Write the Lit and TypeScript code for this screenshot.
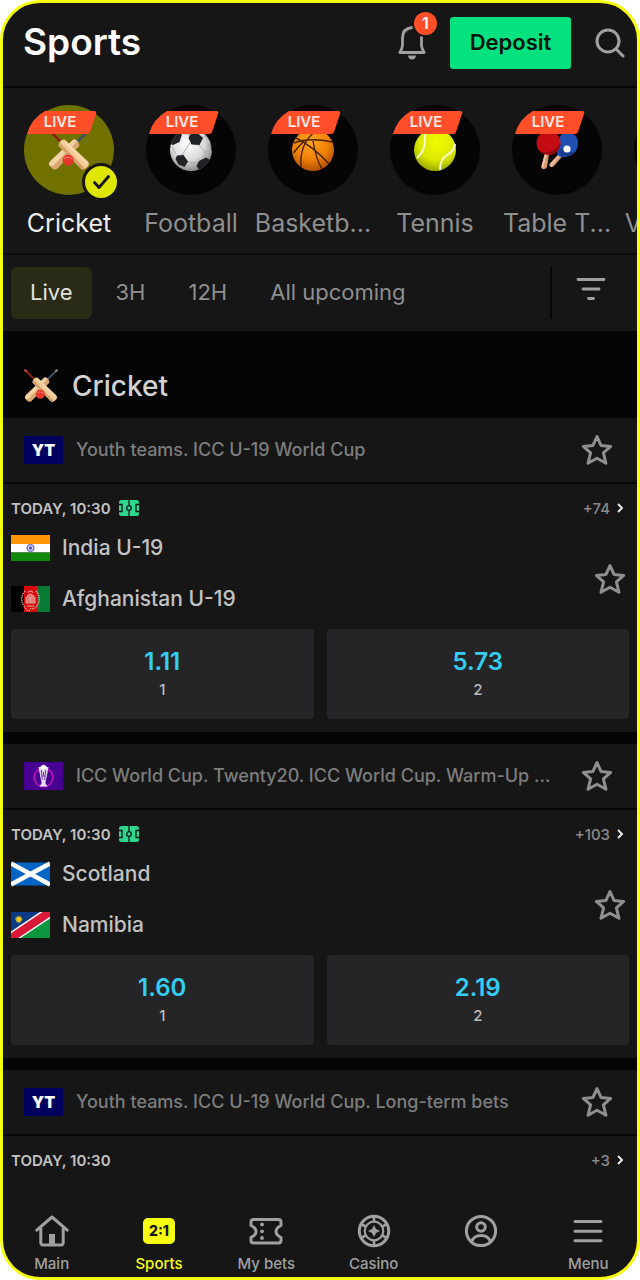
import { LitElement, html, svg, css } from "lit";
import { customElement, property, state } from "lit/decorators.js";

type Team = { name: string; flag: string };
type Match = { time: string; more: string; pitch: boolean; teams: Team[]; odds: string[] };
type League = { badge: string; name: string; match: Match };

const SPORTS = [
  { id: "cricket", label: "Cricket", live: true },
  { id: "football", label: "Football", live: true },
  { id: "basketball", label: "Basketb...", live: true },
  { id: "tennis", label: "Tennis", live: true },
  { id: "tabletennis", label: "Table T...", live: true },
  { id: "volleyball", label: "Volleyb...", live: false },
];

const LEAGUES: League[] = [
  {
    badge: "yt",
    name: "Youth teams. ICC U-19 World Cup",
    match: {
      time: "TODAY, 10:30",
      more: "+74",
      pitch: true,
      teams: [
        { name: "India U-19", flag: "india" },
        { name: "Afghanistan U-19", flag: "afghanistan" },
      ],
      odds: ["1.11", "5.73"],
    },
  },
  {
    badge: "cup",
    name: "ICC World Cup. Twenty20. ICC World Cup. Warm-Up ...",
    match: {
      time: "TODAY, 10:30",
      more: "+103",
      pitch: true,
      teams: [
        { name: "Scotland", flag: "scotland" },
        { name: "Namibia", flag: "namibia" },
      ],
      odds: ["1.60", "2.19"],
    },
  },
  {
    badge: "yt",
    name: "Youth teams. ICC U-19 World Cup. Long-term bets",
    match: { time: "TODAY, 10:30", more: "+3", pitch: false, teams: [], odds: [] },
  },
];

const cricketArt = svg`
  <g stroke-linecap="round" fill="none">
    <path d="M1.500 1.500 11 11" stroke="#8f1d12" stroke-width="2"/>
    <path d="M1.200 1.200 2 2" stroke="#d8523c" stroke-width="2"/>
    <path d="M32.500 1.500 23 11" stroke="#3d4f5c" stroke-width="2"/>
    <path d="M32.800 1.200 32 2" stroke="#7c8a94" stroke-width="2"/>
  </g>
  <path d="M20.500 8.500 Q24.500 8 25.500 13.500 L8 31.500 Q6 33.800 3.500 32 L1.500 30 Q0 28 2 26 Z" fill="#d9a873"/>
  <path d="M20.500 8.500 Q22.500 8 23.500 10 L4.500 29.500 1.500 30 Q0 28 2 26 Z" fill="#f3d3a4"/>
  <path d="M13.500 8.500 Q9.500 8 8.500 13.500 L26 31.500 Q28 33.800 30.500 32 L32.500 30 Q34 28 32 26 Z" fill="#f2cb98"/>
  <path d="M9.300 10.800 Q8.500 12 8.500 13.500 L26 31.500 Q28 33.800 30 32 Z" fill="#d6a16a"/>
  <path d="M13.800 10.500 31.500 28" stroke="#fbe3bd" stroke-width="1" fill="none"/>
  <circle cx="16.300" cy="25.200" r="4.500" fill="#e5382d"/>
  <path d="M12.800 23.800 Q16.300 21.800 19.800 24" stroke="#ff8273" stroke-width=".8" fill="none"/>`;

const cricket = (cls: string) => html`<svg class=${cls} viewBox="0 0 34 34" aria-hidden="true">${cricketArt}</svg>`;

const art: Record<string, unknown> = {
  cricket: cricket("ball"),
  football: html`<svg class="ball" viewBox="0 0 42 42" aria-hidden="true">
    <defs><radialGradient id="f" cx=".42" cy=".35" r=".65"><stop offset="0" stop-color="#fff"/><stop offset=".6" stop-color="#dcdcdc"/><stop offset="1" stop-color="#8d8d8d"/></radialGradient>
    <clipPath id="fc"><circle cx="21" cy="21" r="21"/></clipPath></defs>
    <circle cx="21" cy="21" r="21" fill="url(#f)"/>
    <g clip-path="url(#fc)">
      <g stroke="#a9a9a9" stroke-width=".9" fill="none"><path d="M20 6 11 4M32 9 38 5M29 16 35 23M20 14 14 23M16 33 27 34M6 25 2 18M35 23 35 29M14 23 12 26M35 23 42 22"/></g>
      <g fill="#202124"><path d="M20 5.500 27 3.500 33 9 29.500 16 21.500 15.500 18.500 9Z"/><path d="M7 26.500 13.500 26 18 32.500 14.500 38 8.500 35.500 5.500 30Z"/><path d="M29 32 36 28.500 42 32 38 41 30 42 26.500 37Z"/><path d="M0 8 8 3 12 5.500 9.500 13 3 16 -2 14Z"/><path d="M40 12 44 12 44 25 41.500 22Z"/></g>
    </g></svg>`,
  basketball: html`<svg class="ball" viewBox="0 0 42 42" aria-hidden="true">
    <defs><radialGradient id="b" cx=".45" cy=".3" r=".75"><stop offset="0" stop-color="#ffa51e"/><stop offset=".55" stop-color="#f08208"/><stop offset="1" stop-color="#a94700"/></radialGradient></defs>
    <circle cx="21" cy="21" r="21" fill="url(#b)"/>
    <g fill="none" stroke="#4b2203" stroke-width="1.400"><path d="M2 14 Q18 8 40 13M4 9 Q22 18 37 35M9 38 Q7 14 25 1M1.500 24 Q6 18 11 13M21 12 Q24 30 30 40"/></g></svg>`,
  tennis: html`<svg class="ball" viewBox="0 0 42 42" aria-hidden="true">
    <defs><radialGradient id="t" cx=".55" cy=".3" r=".75"><stop offset="0" stop-color="#f1fb00"/><stop offset=".6" stop-color="#dbe800"/><stop offset="1" stop-color="#8f9e00"/></radialGradient></defs>
    <circle cx="21" cy="21" r="21" fill="url(#t)"/>
    <g fill="none" stroke="#f6f8d8" stroke-width="2"><path d="M11 2.500 Q11 10 10.500 16 T3 29M41 15 Q40 22 33 26 T26 41"/></g></svg>`,
  tabletennis: html`<svg class="ball" viewBox="0 0 42 42" aria-hidden="true">
    <path d="M24 24 27 26.500 18 37 Q16 39 14 37.500 T15 33.500Z" fill="#d79a78"/><path d="M24 24 25.500 25 15.500 37 14 36.500 Q14 35 15 33.500Z" fill="#f0c0a0"/>
    <path d="M21 26 25 28 Q34 29 40 22 Q44 14 40 7 Q33 1 26 5 Q21 10 22 18Z" fill="#1f4fb0"/>
    <path d="M22 20 25 27 Q34 29 40 22 Q32 26 27 20Z" fill="#173d8c"/>
    <path d="M9 24 13 25 11 38 Q10 40.500 7.500 40 T5.500 37Z" fill="#d79a78"/><path d="M9 24 11 24.500 7 40 Q5.500 39 5.500 37Z" fill="#f0c0a0"/>
    <circle cx="12.500" cy="14" r="12" fill="#c40d12"/><path d="M2 20 Q8 28 19 24 Q24 20 24.500 14 Q20 22 12 23 Q6 24 2 20Z" fill="#8d0b10"/>
    <circle cx="31" cy="20" r="3.600" fill="#fff"/></svg>`,
  volleyball: html`<svg class="ball" viewBox="0 0 42 42" aria-hidden="true"><circle cx="21" cy="21" r="21" fill="#e9c536"/></svg>`,
};

const flags: Record<string, unknown> = {
  india: html`<svg class="flag" viewBox="0 0 39 26" aria-hidden="true"><path fill="#ff9608" d="M0 0h39v9H0z"/><path fill="#fff" d="M0 9h39v8.500H0z"/><path fill="#108a08" d="M0 17.500h39V26H0z"/><circle cx="19.500" cy="13" r="3.600" fill="#c9c7ee" stroke="#4b47b4" stroke-width=".9"/><circle cx="19.500" cy="13" r="1.500" fill="#4b47b4"/></svg>`,
  afghanistan: html`<svg class="flag" viewBox="0 0 39 26" aria-hidden="true"><path d="M0 0h13v26H0z"/><path fill="#d60a0e" d="M13 0h13v26H13z"/><path fill="#0a7a35" d="M26 0h13v26H26z"/><g fill="none" stroke="#e9a9a0"><path d="M14 5 Q8 12 13 20 T19.500 22.500 Q23 23.500 26 20 Q31 12 25 5" stroke-width="1.300" stroke-dasharray="1.500 .8"/><path d="M15 17 V12 Q19.500 4 24 12 V17Z" fill="#e8776e" stroke-width=".9"/><path d="M16 20h7M17 6.500 Q19.500 3.500 22 6.500M19.500 11v5" stroke-width="1.200"/></g></svg>`,
  scotland: html`<svg class="flag" viewBox="0 0 39 26" aria-hidden="true"><path fill="#0565c5" d="M0 1.500h39v23H0z"/><path d="M0 2.500 39 23.500M39 2.500 0 23.500" stroke="#fff" stroke-width="4.500"/></svg>`,
  namibia: html`<svg class="flag" viewBox="0 0 39 26" aria-hidden="true"><path fill="#0a3a86" d="M0 0h39L0 26z"/><path fill="#0b963f" d="M39 0v26H0z"/><path fill="#fff" d="M29 0h10v6.500L9.500 26H0v-6.500z"/><path fill="#d91737" d="M31.500 0H39v4.800L7.200 26H0v-4.800z"/><circle cx="7.800" cy="7.300" r="2.600" fill="#f5cf17"/><circle cx="7.800" cy="7.300" r="3.200" fill="none" stroke="#f5cf17" stroke-width="1" stroke-dasharray="1 .8"/></svg>`,
};

const star = html`<svg class="star" viewBox="0 0 32 32" aria-hidden="true"><path d="M16 2.500 20 11.400 29.700 12.400 22.400 18.900 25 29.300 16 24.300 7 29.300 9.600 18.900 2.300 12.400 12 11.400Z" fill="none" stroke="#8f8f8f" stroke-width="3" stroke-linejoin="round"/></svg>`;

const pitchIcon = html`<svg class="pitch" viewBox="0 0 20 16" role="img" aria-label="Field view"><rect width="20" height="16" rx="2.500" fill="#2fd68b"/><g fill="none" stroke="#16161a" stroke-width="1.300"><path d="M10 0v5.600M10 10.400V16M0 4.500h3v7H0M20 4.500h-3v7h3"/><circle cx="10" cy="8" r="2.300"/></g></svg>`;

const navIcons: Record<string, unknown> = {
  Main: html`<svg class="nav-icon" viewBox="0 0 36 34" fill="none" stroke="#a0a0a0" stroke-width="3" stroke-linejoin="round" stroke-linecap="round" aria-hidden="true"><path d="M2.800 16.200 18 3 33.200 16.200M6.800 14V28.500Q6.800 31 9.300 31H26.700Q29.200 31 29.200 28.500V14"/><path d="M15 30V20h6v10z" fill="#a0a0a0" stroke="none"/></svg>`,
  "My bets": html`<svg class="nav-icon" viewBox="0 0 36 34" fill="none" stroke="#a0a0a0" stroke-width="3" stroke-linejoin="round" aria-hidden="true"><path d="M5.500 5.500H30.500Q33 5.500 33 8V11.500Q28 14 28 17.500T33 23.500V26.500Q33 29 30.500 29H5.500Q3 29 3 26.500V23.500Q8 21 8 17.500T3 11.500V8Q3 5.500 5.500 5.500Z"/><g fill="#a0a0a0" stroke="none"><circle cx="14" cy="10.500" r="1.900"/><circle cx="14" cy="17.300" r="1.900"/><circle cx="14" cy="24" r="1.900"/></g></svg>`,
  Casino: html`<svg class="nav-icon" viewBox="0 0 36 34" fill="none" stroke="#a0a0a0" aria-hidden="true"><circle cx="18" cy="17" r="14.700" stroke-width="3"/><circle cx="18" cy="17" r="9.300" stroke-width="2.200"/><path d="M18 3v5M18 26v5M5 10l5 2.700M26 21.300l5 2.700M5 24l5-2.700M26 12.700 31 10" stroke-width="2.600"/><path d="M18 11 20 15 24 17 20 19 18 23 16 19 12 17 16 15Z" fill="#a0a0a0" stroke="none"/></svg>`,
  "": html`<svg class="nav-icon" viewBox="0 0 36 34" fill="none" stroke="#a0a0a0" stroke-width="3" aria-hidden="true"><circle cx="18" cy="17" r="14.600"/><circle cx="18" cy="13" r="4.300"/><path d="M8.500 28 Q10.500 21.500 18 21.500T27.500 28"/></svg>`,
  Menu: html`<svg class="nav-icon" viewBox="0 0 36 34" stroke="#a0a0a0" stroke-width="3" stroke-linecap="round" aria-hidden="true"><path d="M5 7.500H31M5 17.200H31M5 26.800H31"/></svg>`,
};

const shared = css`
  * { box-sizing: border-box; }
  button { font: inherit; color: inherit; background: none; border: 0; padding: 0; margin: 0; cursor: pointer; }
  h1, h2, h3, p { margin: 0; }
  svg { display: block; flex: none; }
  .star { width: 32px; height: 32px; }
`;

@customElement("sport-chip")
class SportChip extends LitElement {
  @property() sport = "";
  @property() label = "";
  @property({ type: Boolean }) active = false;
  @property({ type: Boolean }) live = false;
  static styles = [shared, css`
    :host { display: block; flex: none; width: 122px; }
    .chip { display: flex; flex-direction: column; align-items: center; gap: 13px; width: 100%; }
    .disc { position: relative; display: grid; place-items: center; width: 90px; height: 90px; border-radius: 50%; background: #050505; }
    .active .disc { background: #717100; }
    .ball { width: 42px; height: 42px; }
    .ribbon { position: absolute; top: 6px; left: 0; width: 74px; height: 23px; }
    .live { position: absolute; top: 6px; left: 18px; width: 36px; font-size: 15px; font-weight: 600; line-height: 22px; color: #ffe9e2; text-align: center; }
    .check { position: absolute; right: -6px; bottom: -6px; width: 38px; height: 38px; }
    .label { font-size: 25px; line-height: 30px; color: #8f8f8f; white-space: nowrap; }
    .active .label { color: #ededed; }
  `];
  render() {
    return html`<button class="chip ${this.active ? "active" : ""}" aria-pressed=${this.active ? "true" : "false"}>
      <span class="disc">
        ${art[this.sport]}
        ${this.live ? html`<svg class="ribbon" viewBox="0 0 74 23" aria-hidden="true"><path d="M21 0H70Q73 0 72 3L66 21Q65.500 23 63 23H3Q7 8 21 0Z" fill="#ff4e28"/></svg>
        <span class="live">LIVE</span>` : ""}
        ${this.active ? html`<svg class="check" viewBox="0 0 38 38" aria-hidden="true"><circle cx="19" cy="19" r="17.500" fill="#dde500" stroke="#161616" stroke-width="3"/><path d="M12.500 19.500 17 24.500 26.500 13.500" fill="none" stroke="#161616" stroke-width="2.800" stroke-linecap="round" stroke-linejoin="round"/></svg>` : ""}
      </span>
      <span class="label">${this.label}</span>
    </button>`;
  }
}

@customElement("league-block")
class LeagueBlock extends LitElement {
  @property({ attribute: false }) league!: League;
  static styles = [shared, css`
    :host { display: block; background: #161616; }
    .league { display: flex; align-items: center; gap: 13px; height: 66px; padding: 0 24px 0 21px; border-bottom: 2px solid #070707; }
    .badge { flex: none; width: 39px; height: 28px; display: grid; place-items: center; background: #00005f; color: #fff; font-size: 16px; font-weight: 900; }
    .name { flex: 1; min-width: 0; overflow: hidden; white-space: nowrap; font-size: 18px; font-weight: 450; line-height: 24px; color: #7d7d7d; }
    .match { display: flex; flex-direction: column; padding: 14px 8px 13px; }
    .meta { display: flex; align-items: center; gap: 8px; height: 20px; }
    .time { font-size: 15px; font-weight: 600; color: #c2c2c2; }
    .more { display: flex; align-items: center; gap: 6px; margin-left: auto; padding-right: 5px; font-size: 15px; font-weight: 500; color: #8a8a8a; }
    .pitch { width: 20px; height: 16px; }
    .chevron { width: 8px; height: 12px; }
    .body { display: flex; align-items: center; justify-content: space-between; padding: 4px 3px 5px 0; }
    .teams { display: grid; }
    .team { display: flex; align-items: center; gap: 12px; height: 51px; font-size: 21px; font-weight: 450; color: #c2c2c2; }
    .flag { width: 39px; height: 26px; }
    .fav { padding-top: 12px; }
    .odds { display: grid; grid-template-columns: 1fr 1fr; gap: 13px; }
    .odd { display: flex; flex-direction: column; align-items: center; justify-content: center; gap: 2px; height: 90px; border-radius: 4px; background: #252527; }
    .value { font-size: 24px; font-weight: 600; line-height: 30px; color: #35cdf2; }
    .pick { font-size: 15px; font-weight: 500; line-height: 22px; color: #bdbdbd; }
  `];
  render() {
    const { badge, name, match } = this.league;
    return html`
      <header class="league">
        ${badge === "yt"
          ? html`<span class="badge">YT</span>`
          : html`<svg class="badge" viewBox="0 0 39 28" aria-hidden="true"><path fill="#480093" d="M0 0h39v28H0z"/><circle cx="19.500" cy="15.500" r="9.300" fill="none" stroke="#c014bd" stroke-width="1.500"/><path d="M14.500 5h10l-2 11-1.200 5 2.200 3.500h-8l2.200-3.500-1.200-5z" fill="#e8dcf5"/><path d="M16.500 4.500 Q19.500 1 22.500 4.500V7h-6z" fill="#fff"/><path d="M17.300 8 18.300 18M21.700 8 20.700 18M19.500 10v3M18 14h3" stroke="#480093" stroke-width=".8"/></svg>`}
        <h3 class="name">${name}</h3>
        <button aria-label="Favourite league">${star}</button>
      </header>
      <section class="match">
        <div class="meta">
          <span class="time">${match.time}</span>
          ${match.pitch ? pitchIcon : ""}
          <button class="more">${match.more}<svg class="chevron" viewBox="0 0 8 12" aria-hidden="true"><path d="M2 2 6 6 2 10" fill="none" stroke="#ededed" stroke-width="1.900"/></svg></button>
        </div>
        ${match.teams.length
          ? html`<div class="body">
                <div class="teams">${match.teams.map((t) => html`<div class="team">${flags[t.flag]}<span>${t.name}</span></div>`)}</div>
                <button class="fav" aria-label="Favourite match">${star}</button>
              </div>
              <div class="odds">${match.odds.map((o, i) => html`<button class="odd"><span class="value">${o}</span><span class="pick">${i + 1}</span></button>`)}</div>`
          : ""}
      </section>`;
  }
}

@customElement("app-root")
class AppRoot extends LitElement {
  @state() tab = "Live";
  static styles = [shared, css`
    :host { display: block; font-family: Inter, "Liberation Sans", sans-serif; background: #fff; }
    .frame { display: flex; flex-direction: column; min-height: 100vh; overflow: hidden; border: 3px solid #f7ff10; border-radius: 40px; background: #161616; }
    .top { display: flex; align-items: center; padding: 14px 12px 17px 20px; border-bottom: 2px solid #050505; }
    .title { font-size: 37px; font-weight: 600; line-height: 50px; padding-bottom: 2px; color: #fff; margin-right: auto; }
    .bell { position: relative; width: 28px; height: 36px; }
    .bell-icon { width: 28px; height: 36px; }
    .count { position: absolute; top: -13px; left: 16px; width: 23px; height: 23px; border-radius: 50%; background: #ff4e28; box-shadow: 0 0 0 2px #161616; color: #fff; font-size: 16px; font-weight: 600; line-height: 23px; text-align: center; }
    .deposit { height: 52px; width: 121px; margin: 0 24px; padding-bottom: 2px; border-radius: 3px; background: #03e27e; color: #08150e; font-size: 22px; font-weight: 600; }
    .search { width: 30px; height: 30px; }
    .sports { display: flex; padding: 17px 0 15px 5px; border-bottom: 2px solid #0b0b0b; }
    .filters { display: flex; align-items: center; height: 76px; padding: 0 31px 0 8px; }
    .tabs { display: flex; gap: 1px; margin-right: auto; }
    .tab { height: 52px; padding: 0 21px 2px; border-radius: 6px; color: #8f8f8f; font-size: 22px; }
    .tab.active { padding: 0 19px 2px; margin-right: 2px; background: #2a2b17; color: #e2e2dc; }
    .rule { width: 2px; height: 52px; margin-right: 24px; background: #070707; }
    .filter { width: 30px; height: 28px; margin-bottom: 6px; }
    .section { display: flex; align-items: center; gap: 14px; height: 87px; padding: 23px 21px 0; background: #050505; font-size: 28px; font-weight: 550; color: #d2d2d2; }
    .section h2 { font: inherit; }
    .bats { width: 34px; height: 34px; }
    .list { display: flex; flex-direction: column; gap: 12px; background: #050505; }
    .nav { display: flex; margin: auto -5px 0; padding-bottom: 2px; }
    .nav-link { display: flex; flex: 1; flex-direction: column; align-items: center; gap: 6px; height: 61px; color: #a0a0a0; font-size: 15px; font-weight: 500; line-height: 20px; text-decoration: none; }
    .nav-link.current { color: #f7ff10; }
    .nav-icon { width: 36px; height: 34px; }
    .score { display: grid; place-items: center; width: 32px; height: 26px; margin: 4px 0; border-radius: 5px; background: #f7ff10; color: #161616; font-size: 14px; font-weight: 800; }
  `];
  render() {
    return html`<div class="frame">
      <header class="top">
        <h1 class="title">Sports</h1>
        <button class="bell" aria-label="Notifications">
          <svg class="bell-icon" viewBox="0 0 28 36" fill="none" stroke="#a0a0a0" stroke-width="2.800" stroke-linejoin="round" stroke-linecap="round" aria-hidden="true"><path d="M14 2.500 Q4.500 3.500 4.500 13V20Q4.500 24 1.800 27.500H26.200Q23.500 24 23.500 20V12"/><path d="M10 30.500H18Q17.500 34.500 14 34.500T10 30.500Z" fill="#a0a0a0" stroke="none"/></svg>
          <span class="count">1</span>
        </button>
        <button class="deposit">Deposit</button>
        <button aria-label="Search"><svg class="search" viewBox="0 0 30 30" fill="none" stroke="#a0a0a0" stroke-width="3" stroke-linecap="round" aria-hidden="true"><circle cx="13" cy="13" r="11"/><path d="M21 21 28 28"/></svg></button>
      </header>
      <nav class="sports" aria-label="Sports">
        ${SPORTS.map((s) => html`<sport-chip sport=${s.id} label=${s.label} ?live=${s.live} ?active=${s.id === "cricket"}></sport-chip>`)}
      </nav>
      <div class="filters">
        <div class="tabs">
          ${["Live", "3H", "12H", "All upcoming"].map((t) => html`<button class="tab ${this.tab === t ? "active" : ""}" @click=${() => (this.tab = t)}>${t}</button>`)}
        </div>
        <span class="rule"></span>
        <button aria-label="Filter"><svg class="filter" viewBox="0 0 30 28" stroke="#a0a0a0" stroke-width="2.800" stroke-linecap="round" aria-hidden="true"><path d="M2 3.500H28M7 13H23M12.500 22.500H17.500"/></svg></button>
      </div>
      <div class="section">${cricket("bats")}<h2>Cricket</h2></div>
      <main class="list">${LEAGUES.map((l) => html`<league-block .league=${l}></league-block>`)}</main>
      <nav class="nav" aria-label="Main">
        ${["Main", "Sports", "My bets", "Casino", "", "Menu"].map((n) => html`<a class="nav-link ${n === "Sports" ? "current" : ""}" href="#" aria-label=${n || "Profile"}>${n === "Sports" ? html`<span class="score">2:1</span>` : navIcons[n]}<span>${n}</span></a>`)}
      </nav>
    </div>`;
  }
}
